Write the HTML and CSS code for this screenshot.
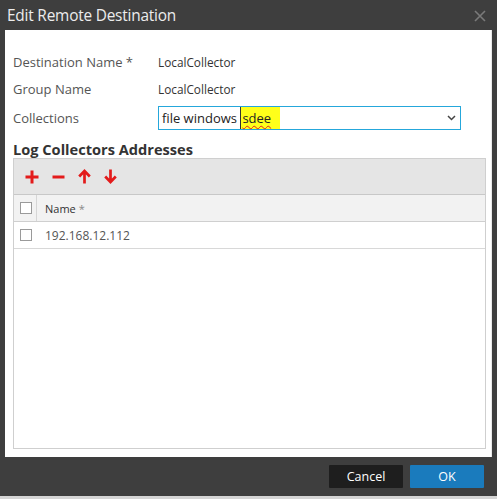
FILE: index.html
```html
<!DOCTYPE html>
<html>
<head>
<meta charset="utf-8">
<link rel="stylesheet" href="styles.css">
</head>
<body>
<div class="dialog">
  <div class="titlebar">
    <span class="title">Edit Remote Destination</span>
    <svg class="close" width="12" height="12" viewBox="0 0 12 12"><path d="M1 1L11 11M11 1L1 11" stroke="#7a7a7a" stroke-width="1.6" fill="none"/></svg>
  </div>
  <div class="content">
    <div class="row r1"><span class="label">Destination Name *</span><span class="value">LocalCollector</span></div>
    <div class="row r2"><span class="label">Group Name</span><span class="value">LocalCollector</span></div>
    <div class="row r3"><span class="label">Collections</span>
      <div class="select"><span class="seltext">file windows <span class="hl">sdee</span></span>
        <svg class="chev" width="9" height="6" viewBox="0 0 9 6"><path d="M1 1L4.5 4.5L8 1" stroke="#444" stroke-width="1.5" fill="none"/></svg>
      </div>
    </div>
    <div class="heading">Log Collectors Addresses</div>
    <div class="table">
      <div class="toolbar">
        <svg class="ic" width="14" height="14" viewBox="0 0 14 14"><path d="M7 0.5V13.5M0.5 7H13.5" stroke="#e31b1b" stroke-width="3" fill="none"/></svg>
        <svg class="ic" width="13" height="14" viewBox="0 0 13 14"><path d="M0.5 7H12.5" stroke="#e31b1b" stroke-width="3" fill="none"/></svg>
        <svg class="ic" width="13" height="15" viewBox="0 0 13 15"><path d="M6.5 14.5V2M1.2 7.5L6.5 2L11.8 7.5" stroke="#e31b1b" stroke-width="2.7" fill="none"/></svg>
        <svg class="ic" width="13" height="15" viewBox="0 0 13 15"><path d="M6.5 0.5V13M1.2 7.5L6.5 13L11.8 7.5" stroke="#e31b1b" stroke-width="2.7" fill="none"/></svg>
      </div>
      <div class="thead">
        <div class="cbcell"><span class="cb"></span></div>
        <div class="namecell">Name <span class="star">*</span></div>
      </div>
      <div class="trow">
        <div class="cbcell nosep"><span class="cb"></span></div>
        <div class="namecell val">192.168.12.112</div>
      </div>
    </div>
  </div>
  <div class="footer">
    <button class="btn cancel">Cancel</button>
    <button class="btn ok">OK</button>
  </div>
</div>
</body>
</html>
```
FILE: styles.css
```css
html, body { margin: 0; padding: 0; }
body { background: #d4d4d4; width: 497px; height: 499px; overflow: hidden; font-family: "Open Sans", "Noto Sans", sans-serif; }
.dialog { width: 497px; height: 496px; background: #3e3e3e; display: flex; flex-direction: column; }
.titlebar { height: 30px; display: flex; align-items: center; justify-content: space-between; padding: 0 11px 0 7px; box-sizing: border-box; }
.title { color: #ececec; font-size: 15.4px; letter-spacing: -0.2px; }
.close { margin-top: 2px; }
.content { background: #fff; margin: 0 5px 0 5px; height: 427px; box-sizing: border-box; padding: 22px 5px 8px 8px; display: flex; flex-direction: column; border-right: 1px solid #e8e8e8; }
.row { display: flex; align-items: center; }
.r1 { height: 20px; }
.r2 { height: 20px; margin-top: 7px; }
.r3 { height: 24px; margin-top: 7px; }
.label { width: 145px; color: #555; font-size: 13px; }
.value { color: #333; font-size: 11.8px; }
.select { width: 303px; height: 24px; box-sizing: border-box; border: 1px solid #25a7db; display: flex; align-items: center; justify-content: space-between; padding: 0 4px 0 3px; }
.seltext { color: #222; font-size: 13px; display: flex; align-items: center; white-space: pre; height: 22px; }
.hl { background: #ffff1a; height: 22px; display: inline-flex; align-items: center; padding: 0 9px 0 1px; border-left: 1px solid #333; text-decoration: underline wavy #e02020; text-decoration-thickness: 1px; text-underline-offset: 2px; }
.heading { margin-top: 11px; height: 17px; line-height: 17px; color: #333; font-weight: bold; font-size: 14.6px; }
.table { flex: 1; border: 1px solid #cfcfcf; display: flex; flex-direction: column; }
.toolbar { height: 36px; background: #e5e5e5; border-bottom: 1px solid #c8c8c8; display: flex; align-items: center; padding-left: 11px; gap: 13px; box-sizing: border-box; flex: none; }
.ic { display: block; }
.thead { height: 27px; background: #f2f2f2; border-bottom: 1px solid #cfcfcf; display: flex; box-sizing: border-box; }
.trow { height: 27px; border-bottom: 1px solid #d8d8d8; display: flex; box-sizing: border-box; }
.cbcell { width: 23px; border-right: 1px solid #d6d6d6; display: flex; align-items: center; padding-left: 6px; box-sizing: border-box; }
.cbcell.nosep { border-right-color: transparent; }
.cb { width: 12px; height: 12px; border: 1px solid #9a9a9a; background: #fff; box-sizing: border-box; }
.namecell { display: flex; align-items: center; padding-left: 8px; font-size: 11px; color: #333; }
.star { color: #888; margin-left: 3px; }
.namecell.val { font-size: 12px; color: #555; }
.footer { flex: 1; display: flex; justify-content: flex-end; align-items: flex-start; padding: 8px 13px 0 0; gap: 7px; }
.btn { width: 74px; height: 23px; border: none; color: #fff; font-family: "Open Sans", "Noto Sans", sans-serif; font-size: 12.5px; padding: 0; border-radius: 1px; }
.cancel { background: #1e1e1e; }
.ok { background: #1a7bbd; }
```
